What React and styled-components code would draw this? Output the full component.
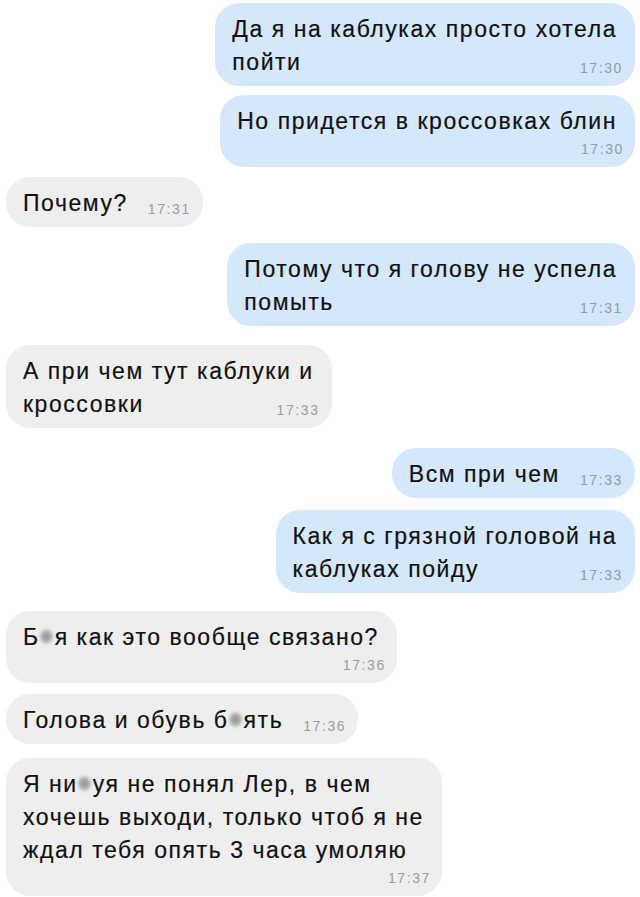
import React from "react"
import styled, { createGlobalStyle } from "styled-components"

const GlobalStyle = createGlobalStyle`
  html, body {
    margin: 0;
    padding: 0;
    background: #ffffff;
  }
  body {
    font-family: "Liberation Sans", Arial, sans-serif;
    color: #111111;
  }
`

const messages = [
  { out: true, gap: 3, lines: ["Да я на каблуках просто хотела", "пойти"], time: "17:30" },
  { out: true, gap: 9, lines: ["Но придется в кроссовках блин"], time: "17:30", timeBelow: true },
  { out: false, gap: 10, lines: ["Почему?"], time: "17:31" },
  { out: true, gap: 16, lines: ["Потому что я голову не успела", "помыть"], time: "17:31" },
  { out: false, gap: 19, lines: ["А при чем тут каблуки и", "кроссовки"], time: "17:33" },
  { out: true, gap: 20, lines: ["Всм при чем"], time: "17:33" },
  { out: true, gap: 12, lines: ["Как я с грязной головой на", "каблуках пойду"], time: "17:33" },
  { out: false, gap: 18, lines: [["Б", null, "я как это вообще связано?"]], time: "17:36", timeBelow: true },
  { out: false, gap: 11, lines: [["Голова и обувь б", null, "ять"]], time: "17:36" },
  {
    out: false,
    gap: 14,
    lines: [
      ["Я ни", null, "уя не понял Лер, в чем"],
      "хочешь выходи, только чтоб я не",
      "ждал тебя опять 3 часа умоляю",
    ],
    time: "17:37",
    timeBelow: true,
  },
]

const Chat = styled.div`
  display: flex;
  flex-direction: column;
  padding: 0 5px 0 6px;
`

const Row = styled.div`
  display: flex;
  justify-content: ${p => (p.$out ? "flex-end" : "flex-start")};
  margin-top: ${p => p.$gap}px;
`

const Bubble = styled.div`
  background: ${p => (p.$out ? "#d5e7fa" : "#eeeeef")};
  border-radius: 24px;
  padding: 10px 18px 7px 17px;
  font-size: 23px;
  line-height: 33px;
  letter-spacing: 1.55px;
  -webkit-text-stroke: 0.2px #111111;
`

const Line = styled.div`
  white-space: nowrap;
`

const LastRow = styled.div`
  display: flex;
  align-items: flex-end;
`

const Time = styled.span`
  flex: none;
  margin: 0 -6px 4px auto;
  padding-left: 20px;
  font-size: 14px;
  line-height: 1;
  letter-spacing: 1.6px;
  -webkit-text-stroke: 0;
  color: ${p => (p.$out ? "#8c9db1" : "#9c9c9e")};
`

const TimeRow = styled.div`
  text-align: right;
  margin-right: -7px;
  font-size: 14px;
  line-height: 22px;
  letter-spacing: 1.6px;
  -webkit-text-stroke: 0;
  color: ${p => (p.$out ? "#8c9db1" : "#9c9c9e")};
`

const Censor = styled.span`
  display: inline-block;
  width: 13px;
  height: 15px;
  margin: 0 2px 0 0;
  vertical-align: 1px;
  border-radius: 50%;
  background: radial-gradient(circle, #8d8d8f 0%, #b5b5b7 55%, rgba(200, 200, 202, 0) 100%);
  filter: blur(1.5px);
`

const renderLine = line =>
  Array.isArray(line)
    ? line.map((part, i) => (part === null ? <Censor key={i} /> : part))
    : line

const Message = ({ msg }) => {
  const head = msg.lines.slice(0, -1)
  const last = msg.lines[msg.lines.length - 1]
  return (
    <Row $out={msg.out} $gap={msg.gap}>
      <Bubble $out={msg.out}>
        {head.map((line, i) => (
          <Line key={i}>{renderLine(line)}</Line>
        ))}
        <LastRow>
          <Line>{renderLine(last)}</Line>
          {!msg.timeBelow && <Time $out={msg.out}>{msg.time}</Time>}
        </LastRow>
        {msg.timeBelow && <TimeRow $out={msg.out}>{msg.time}</TimeRow>}
      </Bubble>
    </Row>
  )
}

const App = () => (
  <>
    <GlobalStyle />
    <Chat>
      {messages.map((msg, i) => (
        <Message key={i} msg={msg} />
      ))}
    </Chat>
  </>
)

export default App
